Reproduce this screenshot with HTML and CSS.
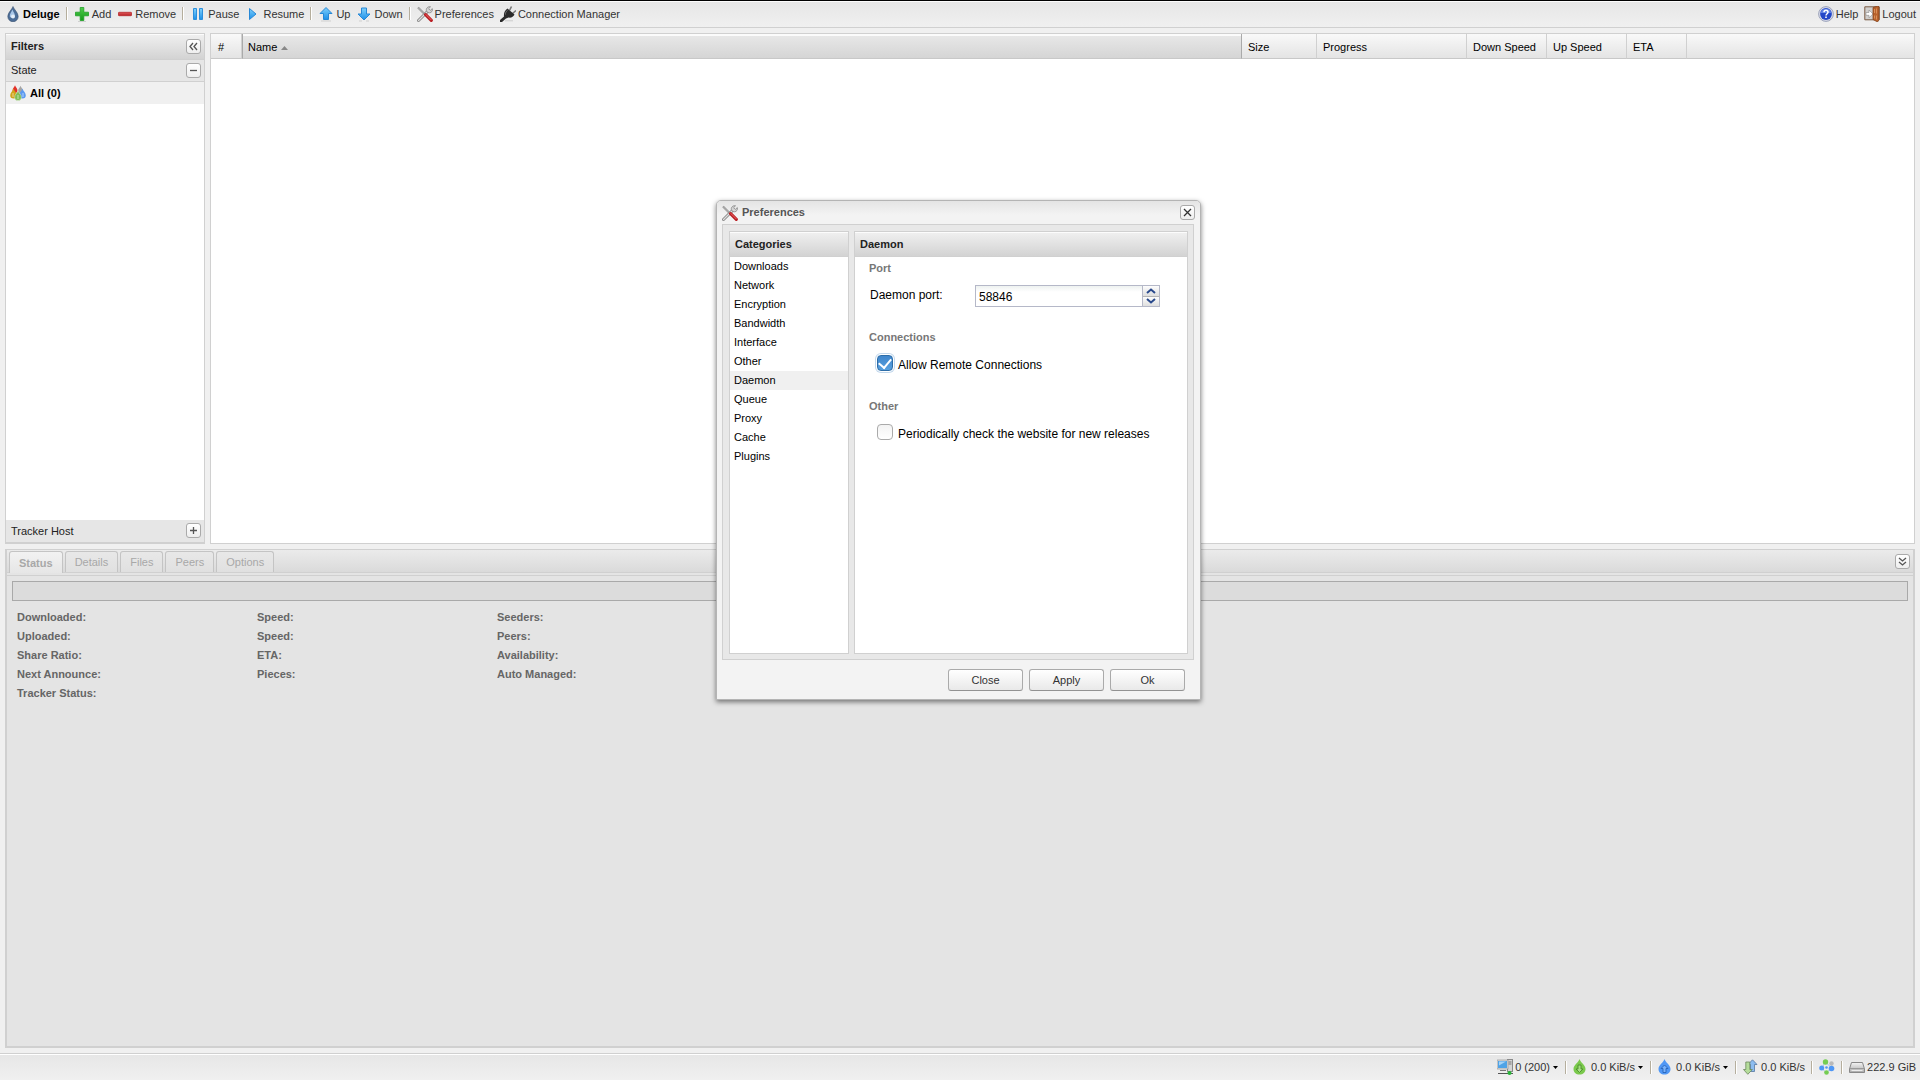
FILE: index.html
```html
<!DOCTYPE html>
<html lang="en">
<head>
  <meta charset="UTF-8">
  <meta name="viewport" content="width=device-width, initial-scale=1.0">
  <title>Deluge: Web UI</title>
  <link rel="stylesheet" href="styles.css">
</head>
<body>
  <svg class="defs" aria-hidden="true">
    <defs>
      <linearGradient id="blue" x1="0" y1="0" x2="0" y2="1">
        <stop offset="0" stop-color="#7fd0fb"/>
        <stop offset="1" stop-color="#1c8fe8"/>
      </linearGradient>
      <linearGradient id="green" x1="0" y1="0" x2="0" y2="1">
        <stop offset="0" stop-color="#4fce4b"/>
        <stop offset="1" stop-color="#159a1b"/>
      </linearGradient>
      <linearGradient id="red" x1="0" y1="0" x2="0" y2="1">
        <stop offset="0" stop-color="#e2595b"/>
        <stop offset="1" stop-color="#b52025"/>
      </linearGradient>
      <linearGradient id="metal" x1="0" y1="0" x2="0" y2="1">
        <stop offset="0" stop-color="#f4f4f4"/>
        <stop offset="1" stop-color="#a9a9a9"/>
      </linearGradient>
      <symbol id="tools" viewBox="0 0 16 16">
        <path d="M1 1.5 9 9.5" stroke="#8b8b8b" stroke-width="2"/>
        <path d="M1 1.5 9 9.5" stroke="#d8d8d8" stroke-width=".7"/>
        <path d="M1.5 14.5 10 6" stroke="#858585" stroke-width="3" stroke-linecap="round"/>
        <path d="M1.5 14.5 10 6" stroke="#dedede" stroke-width="1.3" stroke-linecap="round"/>
        <path d="M13.5.8 11.6 2.7l1.7 1.7 2-1.8c.6 2-.7 4.2-2.8 4.2C10.300 6.800 9 5.300 9.300 3.500 9.600 1.500 11.500.3 13.500.8Z" fill="#d5d5d5" stroke="#858585" stroke-width=".8"/>
        <path d="m8.600 8.600 5.700 5.700" stroke="#b91d22" stroke-width="3.200" stroke-linecap="round"/>
        <path d="m9 8.600 5.200 5.200" stroke="#ee6b69" stroke-width="1" stroke-linecap="round"/>
      </symbol>
    </defs>
  </svg>

  <header class="toolbar">
    <button class="tool brand">
      <svg viewBox="0 0 16 16"><path d="M8 .5C7 3.500 2.800 6.500 2.800 10.500a5.200 5.200 0 0 0 10.400 0C13.200 6.500 9 3.500 8 .5Z" fill="#4c6d97" stroke="#3b5271" stroke-width=".6"/><path d="M7.500 3.500C6.500 6 4.500 8 4.800 10.500c1 2 4.500 1.500 5-.5C10.300 7.500 8 6 7.500 3.500Z" fill="#a9c7e8"/><circle cx="8" cy="10.500" r="2" fill="#e4eef8"/></svg>
      Deluge
    </button>
    <span class="separator"></span>
    <button class="tool">
      <svg viewBox="0 0 16 16"><path d="M6.200 1.500h3.600v4.700h4.700v3.600H9.800v4.700H6.200V9.800H1.500V6.200h4.700Z" fill="url(#green)" stroke="#1ea025" stroke-width=".8"/><path d="M4 15.500h8" stroke="#cfcfcf"/></svg>
      Add
    </button>
    <button class="tool">
      <svg viewBox="0 0 16 16"><rect x="1.500" y="6.300" width="13" height="3.400" rx=".5" fill="url(#red)" stroke="#b8292d" stroke-width=".8"/></svg>
      Remove
    </button>
    <span class="separator"></span>
    <button class="tool">
      <svg viewBox="0 0 16 16"><path d="M3.500 2.500h3v11h-3Zm6 0h3v11h-3Z" fill="url(#blue)" stroke="#2c8fdc"/></svg>
      Pause
    </button>
    <button class="tool">
      <svg viewBox="0 0 16 16"><path d="m4.500 2.500 6.500 5.500-6.500 5.500Z" fill="url(#blue)" stroke="#2788d6"/></svg>
      Resume
    </button>
    <span class="separator"></span>
    <button class="tool">
      <svg viewBox="0 0 16 16"><path d="m8 1.500 6 6h-3.500v6h-5v-6H2Z" fill="url(#blue)" stroke="#2788d6"/><path d="M3 15h10" stroke="#cfcfcf"/></svg>
      Up
    </button>
    <button class="tool">
      <svg viewBox="0 0 16 16"><path d="m8 14 6-6h-3.500V2h-5v6H2Z" fill="url(#blue)" stroke="#2788d6"/><path d="M3 15h3m4 0h3" stroke="#cfcfcf"/></svg>
      Down
    </button>
    <span class="separator"></span>
    <button class="tool">
      <svg><use href="#tools"/></svg>
      Preferences
    </button>
    <button class="tool">
      <svg viewBox="0 0 16 16"><path d="m9.500 4.500 2-4M12.500 7.500l3.500-3" stroke="#777" stroke-width="1.600"/><path d="M7.500 2.500 14.500 8.500c-1 2.500-3.500 3.500-6 3L6 12.500l-4 3.500H0v-2l4-3.500C3.500 7 5 4 7.500 2.500Z" fill="#2b2b2b"/><path d="M7.500 4.500c-1.500 1-2.200 2.500-2 4" stroke="#777" fill="none"/><path d="M5 14.800h8" stroke="#ccc"/></svg>
      Connection Manager
    </button>
    <span class="spacer"></span>
    <button class="tool">
      <svg viewBox="0 0 16 16"><circle cx="8" cy="8" r="7.400" fill="#d9dcea" stroke="#8088a6" stroke-width=".7"/><circle cx="8" cy="8" r="5.900" fill="#2347c8"/><path d="M2.700 7a5.400 5.400 0 0 1 10.600 0Z" fill="#5f82e4"/><path d="M6 6.200C6 3.700 10 3.700 10 6.200 10 7.700 8 7.800 8 9.500" fill="none" stroke="#fff" stroke-width="1.500"/><path d="M7.200 10.500h1.600V12H7.200Z" fill="#fff"/></svg>
      Help
    </button>
    <button class="tool">
      <svg viewBox="0 0 16 16"><path d="M.8.800h14.400v13H.8Z" fill="#d1cfcd" stroke="#7a5a44"/><path d="M2 6.500h3V4l4 3.900-4 3.900V9.300H2Z" fill="#fff" stroke="#8d8d8d" stroke-width=".6"/><path d="M9 1.500 13.500 0 15 .8v13L13.500 16 9 13.500Z" fill="#b8622c" stroke="#803f18" stroke-width=".7"/><path d="M10.500 3v4M12.500 2.500v5M10.500 9.500v3M12.500 9.500v4" stroke="#dc9560" stroke-width=".9"/></svg>
      Logout
    </button>
  </header>

  <main class="workspace">
    <div class="top-row">
      <aside class="sidebar">
        <div class="panel-header">
          <h2>Filters</h2>
          <button class="tool-box" aria-label="Collapse filters"><svg viewBox="0 0 15 15"><path d="m7 4-3 3.500L7 11M11 4 8 7.500 11 11"/></svg></button>
        </div>
        <div class="filter-header">
          State
          <button class="tool-box" aria-label="Collapse state"><svg viewBox="0 0 15 15"><path d="M4 7.500h7"/></svg></button>
        </div>
        <a class="filter-item" href="#all">
          <svg viewBox="0 0 16 16"><path d="M5 .3C4.500 2 2.500 3.500 2.500 5.500a2.500 2.500 0 0 0 5 0C7.500 3.500 5.500 2 5 .3Z" fill="#e3312b"/><path d="M10.500.8C10 2.500 8 4 8 6a2.500 2.500 0 0 0 5 0c0-2-2-3.500-2.500-5.200Z" fill="#a5a5a5"/><path d="M3.500 3.500C3 6 .2 7.500.2 10.300a3.300 3.300 0 0 0 6.600 0C6.800 7.500 4 6 3.500 3.500Z" fill="#d0a51c"/><path d="M12.500 3.500C12 6 9.200 7.500 9.200 10.300a3.300 3.300 0 0 0 6.600 0C15.800 7.500 13 6 12.500 3.500Z" fill="#5b9af0"/><path d="M8 5.500C7.400 8 4.600 9.500 4.600 12.200a3.400 3.400 0 0 0 6.800 0C11.400 9.500 8.600 8 8 5.500Z" fill="#7fbd55" stroke="#eef5e9" stroke-width=".4"/><path d="M8 10v4M3 8v4M13 8v4" stroke="#fff" stroke-opacity=".55"/></svg>
          All (0)
        </a>
        <div class="filter-body"></div>
        <div class="filter-header last">
          Tracker Host
          <button class="tool-box" aria-label="Expand tracker host"><svg viewBox="0 0 15 15"><path d="M4 7.500h7M7.500 4v7"/></svg></button>
        </div>
      </aside>

      <section class="torrents">
        <table>
          <colgroup>
            <col class="col-number">
            <col>
            <col class="col-size">
            <col class="col-progress">
            <col class="col-speed">
            <col class="col-speed">
            <col class="col-eta">
            <col class="col-rest">
          </colgroup>
          <thead>
            <tr>
              <th class="number">#</th>
              <th class="sorted">Name <svg viewBox="0 0 7 4"><path d="M3.500 0 7 4H0Z"/></svg></th>
              <th>Size</th>
              <th>Progress</th>
              <th>Down Speed</th>
              <th>Up Speed</th>
              <th>ETA</th>
              <td></td>
            </tr>
          </thead>
        </table>
      </section>
    </div>

    <section class="details">
      <div class="tabs">
        <button class="tab active" disabled>Status</button>
        <button class="tab" disabled>Details</button>
        <button class="tab" disabled>Files</button>
        <button class="tab" disabled>Peers</button>
        <button class="tab" disabled>Options</button>
        <span class="spacer"></span>
        <button class="tool-box" aria-label="Collapse details"><svg viewBox="0 0 15 15"><path d="m4 4 3.500 3L11 4M4 8l3.500 3L11 8"/></svg></button>
      </div>
      <div class="tab-body">
        <div class="progress"></div>
        <div class="stats">
          <dl>
            <dt>Downloaded:</dt>
            <dt>Uploaded:</dt>
            <dt>Share Ratio:</dt>
            <dt>Next Announce:</dt>
            <dt>Tracker Status:</dt>
          </dl>
          <dl>
            <dt>Speed:</dt>
            <dt>Speed:</dt>
            <dt>ETA:</dt>
            <dt>Pieces:</dt>
          </dl>
          <dl>
            <dt>Seeders:</dt>
            <dt>Peers:</dt>
            <dt>Availability:</dt>
            <dt>Auto Managed:</dt>
          </dl>
        </div>
      </div>
    </section>
  </main>

  <footer class="toolbar statusbar">
    <span class="spacer"></span>
    <button class="tool menu">
      <svg viewBox="0 0 16 16"><rect x="10.500" y=".5" width="5" height="12" fill="#d4d4d4" stroke="#8a8a8a"/><path d="M11.500 3h3M11.500 5h3" stroke="#777"/><rect x=".5" y="1.500" width="10" height="8" fill="#4fa3e6" stroke="#dcdcdc"/><rect x="0" y="1" width="11" height="9" fill="none" stroke="#8a8a8a" stroke-width=".6"/><path d="M2 2.500h7l-7 4Z" fill="#a5d3f7"/><path d="M3 11.500h6" stroke="#777"/><path d="M1 14.500h15" stroke="#555"/><circle cx="12.500" cy="14" r="2" fill="#27b436"/></svg>
      0 (200)
      <svg class="caret" viewBox="0 0 5 3"><path d="M0 0h5L2.500 3Z"/></svg>
    </button>
    <span class="separator"></span>
    <button class="tool menu">
      <svg viewBox="0 0 16 16"><path d="M6.500 0C5.500 3.500.5 6 .5 10c0 3.500 2.500 5.500 6 5.500s6-2 6-5.500c0-4-5-6.500-6-10Z" fill="#7ac94c"/><path d="M5 6h3v4h2L6.500 13.500 3 10h2Z" fill="#a7dc86" stroke="#4b8c2b" stroke-width=".9"/></svg>
      0.0 KiB/s
      <svg class="caret" viewBox="0 0 5 3"><path d="M0 0h5L2.500 3Z"/></svg>
    </button>
    <span class="separator"></span>
    <button class="tool menu">
      <svg viewBox="0 0 16 16"><path d="M6.500 0C5.500 3.500.5 6 .5 10c0 3.500 2.500 5.500 6 5.500s6-2 6-5.500c0-4-5-6.500-6-10Z" fill="#4f97f5"/><path d="M5 13.500h3v-4h2L6.500 6 3 9.500h2Z" fill="#79b2fa" stroke="#2763b8" stroke-width=".9"/></svg>
      0.0 KiB/s
      <svg class="caret" viewBox="0 0 5 3"><path d="M0 0h5L2.500 3Z"/></svg>
    </button>
    <span class="separator"></span>
    <button class="tool">
      <svg viewBox="0 0 16 16"><path d="M7.500 12.500h4v-7H14L9.500.8 5 5.500h2.500Z" fill="#8cbcf0" stroke="#56779f" stroke-width=".8"/><path d="M2.800 3h4v7.500h2.500L4.800 15.300.5 10.500h2.300Z" fill="#b5dd9b" stroke="#69865a" stroke-width=".8"/></svg>
      0.0 KiB/s
    </button>
    <span class="separator"></span>
    <button class="tool" aria-label="DHT nodes">
      <svg viewBox="0 0 16 16"><path d="M6 3 3 9l4 5 6-5Z" stroke="#aac4e6" fill="none"/><circle cx="6.500" cy="3" r="2.700" fill="#75cd52"/><circle cx="12.500" cy="4.500" r="2.200" fill="#b9b9b9"/><circle cx="2.700" cy="9" r="2.500" fill="#4f97f5"/><circle cx="12.500" cy="9.500" r="2.800" fill="#4f97f5"/><circle cx="7.500" cy="13.500" r="2.300" fill="#75cd52"/><circle cx="7.500" cy="8.500" r="1.300" fill="#4f97f5"/></svg>
    </button>
    <span class="separator"></span>
    <button class="tool">
      <svg viewBox="0 0 16 16"><path d="M2.500 3.500h11l2 6.500v3.500H.5V10Z" fill="url(#metal)" stroke="#888"/><path d="M.5 9.500h15" stroke="#999"/><path d="M2.500 11.500h11" stroke="#ececec"/></svg>
      222.9 GiB
    </button>
  </footer>

  <div class="window" role="dialog" aria-labelledby="window-title">
    <div class="window-title">
      <svg><use href="#tools"/></svg>
      <h1 id="window-title">Preferences</h1>
      <button class="tool-box close" aria-label="Close window"><svg viewBox="0 0 15 15"><path d="m4 4 7 7M11 4l-7 7"/></svg></button>
    </div>
    <div class="window-body">
      <nav class="categories">
        <h2 class="panel-header">Categories</h2>
        <a href="#downloads">Downloads</a>
        <a href="#network">Network</a>
        <a href="#encryption">Encryption</a>
        <a href="#bandwidth">Bandwidth</a>
        <a href="#interface">Interface</a>
        <a href="#other">Other</a>
        <a href="#daemon" class="selected">Daemon</a>
        <a href="#queue">Queue</a>
        <a href="#proxy">Proxy</a>
        <a href="#cache">Cache</a>
        <a href="#plugins">Plugins</a>
      </nav>
      <form class="page">
        <h2 class="panel-header">Daemon</h2>
        <h3>Port</h3>
        <div class="port-row">
          <label for="port">Daemon port:</label>
          <div class="spinner">
            <input type="text" id="port" value="58846">
            <div class="spinner-buttons">
              <button type="button" aria-label="Increase"><svg viewBox="0 0 10 6"><path d="m1 5 4-3.500L9 5"/></svg></button>
              <button type="button" aria-label="Decrease"><svg viewBox="0 0 10 6"><path d="m1 1 4 3.500L9 1"/></svg></button>
            </div>
          </div>
        </div>
        <h3>Connections</h3>
        <div class="check-row">
          <input type="checkbox" id="remote" class="focused" checked>
          <label for="remote">Allow Remote Connections</label>
        </div>
        <h3>Other</h3>
        <div class="check-row">
          <input type="checkbox" id="releases">
          <label for="releases">Periodically check the website for new releases</label>
        </div>
      </form>
    </div>
    <div class="window-footer">
      <button>Close</button>
      <button>Apply</button>
      <button>Ok</button>
    </div>
  </div>
</body>
</html>
```
FILE: styles.css
```css
* {
  box-sizing: border-box;
}

body {
  display: flex;
  flex-direction: column;
  height: 100vh;
  margin: 0;
  border-top: 1px solid #000;
  background: #f0f0f0;
  color: #222;
  font: 11px/14px "Liberation Sans", Arial, sans-serif;
  overflow: hidden;
}

h1, h2, h3, dl {
  margin: 0;
  font-size: 11px;
}

button {
  font: inherit;
  color: inherit;
  padding: 0;
}

a {
  color: #000;
  text-decoration: none;
}

.defs {
  position: absolute;
  width: 0;
  height: 0;
}

.spacer {
  flex: 1;
}

/* toolbars */
.toolbar {
  display: flex;
  align-items: center;
  flex: none;
  height: 27px;
  padding: 0 1px 2px 2px;
  border-top: 1px solid #fcfcfc;
  border-bottom: 1px solid #d0d0d0;
  background: linear-gradient(#e6e6e6, #f0f0f0);
  color: #333;
}

.tool {
  display: flex;
  align-items: center;
  gap: 2px;
  height: 22px;
  padding: 0 3px;
  border: none;
  background: none;
  white-space: nowrap;
}

.tool svg {
  width: 16px;
  height: 16px;
}

.brand {
  color: #000;
  font-weight: bold;
}

.separator {
  width: 2px;
  height: 13px;
  margin: 0 3px;
  border-left: 1px solid #b5ae9d;
  border-right: 1px solid #fff;
}

.tool.menu {
  padding-right: 4px;
}

.tool .caret {
  width: 5px;
  height: 3px;
  margin-left: 1px;
}

.statusbar {
  padding-bottom: 0;
  border-top: 1px solid #d0d0d0;
  border-bottom: none;
  box-shadow: inset 0 1px #fff;
}

/* panels */
.workspace {
  display: flex;
  flex-direction: column;
  flex: 1;
  gap: 5px;
  padding: 5px;
  min-height: 0;
}

.top-row {
  display: flex;
  gap: 5px;
  flex: 511;
  min-height: 0;
}

.sidebar {
  display: flex;
  flex-direction: column;
  width: 200px;
  border: 1px solid #d0d0d0;
  background: #fff;
}

.panel-header {
  display: flex;
  align-items: center;
  justify-content: space-between;
  height: 26px;
  padding: 0 3px 2px 5px;
  border-top: 1px solid #fcfcfc;
  border-bottom: 1px solid #d0d0d0;
  background: linear-gradient(#efefef, #d3d3d3);
  color: #222;
}

.tool-box {
  width: 15px;
  height: 15px;
  border: 1px solid #aaa;
  border-radius: 3px;
  background: linear-gradient(#fff, #eee);
  line-height: 0;
}

.tool-box svg {
  width: 15px;
  height: 15px;
  margin: -1px;
  fill: none;
  stroke: #555;
  stroke-width: 1.3;
}

.tool-box.close svg {
  stroke: #333;
}

.filter-header {
  display: flex;
  align-items: center;
  justify-content: space-between;
  height: 22px;
  padding: 0 3px 1px 5px;
  border-bottom: 1px solid #d0d0d0;
  background: #e6e6e6;
}

.filter-header.last {
  height: 23px;
}

.filter-item {
  display: flex;
  align-items: center;
  gap: 4px;
  height: 22px;
  padding-left: 4px;
  background: #f0f0f0;
  font-weight: bold;
}

.filter-item svg {
  width: 16px;
  height: 16px;
}

.filter-body {
  flex: 1;
}

.torrents {
  flex: 1;
  border: 1px solid #d0d0d0;
  background: #fff;
}

.torrents table {
  width: 100%;
  table-layout: fixed;
  border-spacing: 0;
  background: linear-gradient(#f9f9f9, #e3e3e3);
  color: #000;
}

.torrents th,
.torrents td {
  height: 25px;
  padding: 1px 5px 0 6px;
  border-bottom: 1px solid #c8c8c8;
  border-right: 1px solid #d0d0d0;
  font-weight: normal;
  text-align: left;
  white-space: nowrap;
}

.torrents td {
  border-right: none;
}

.torrents .number {
  padding-left: 7px;
}

.torrents .sorted {
  padding-left: 5px;
  border-left: 1px solid #aaa;
  border-right-color: #aaa;
  background: linear-gradient(#fbfbfb 2px, #e7e7e7 2px, #d5d5d5);
}

.sorted svg {
  width: 7px;
  height: 4px;
  margin: 0 0 1px 1px;
  fill: #888;
}

.col-number {
  width: 31px;
}

.col-size {
  width: 75px;
}

.col-progress {
  width: 150px;
}

.col-speed {
  width: 80px;
}

.col-eta {
  width: 60px;
}

.col-rest {
  width: 227px;
}

/* torrent details */
.details {
  display: flex;
  flex-direction: column;
  flex: 496;
  min-height: 0;
  border: 1px solid #d0d0d0;
  border-width: 1px 2px 2px;
  background: #e4e4e4;
}

.tabs {
  display: flex;
  align-items: flex-end;
  gap: 2px;
  height: 23px;
  padding: 0 3px 0 2px;
  border-bottom: 1px solid #d0d0d0;
  background: linear-gradient(#ebebeb, #dadada);
}

.tabs .tool-box {
  margin-bottom: 3px;
}

.tab {
  height: 21px;
  padding: 0 9px;
  border: 1px solid #c4c4c4;
  border-bottom: none;
  border-radius: 3px 3px 0 0;
  background: linear-gradient(#e8e8e8, #e0e0e0);
  color: #a8a8a8;
}

.tab.active {
  height: 22px;
  margin-bottom: -1px;
  background: linear-gradient(#f2f2f2, #e6e6e6);
  font-weight: bold;
}

.tab-body {
  flex: 1;
  margin-top: 2px;
  padding: 5px;
  border-top: 1px solid #d0d0d0;
}

.progress {
  height: 20px;
  border: 1px solid #a9a9a9;
  background: #dcdcdc;
}

.stats {
  display: flex;
  padding: 7px 5px;
}

.stats dl {
  width: 240px;
  color: #666;
  font-weight: bold;
  line-height: 19px;
}

/* preferences window */
.window {
  position: absolute;
  top: 200px;
  left: calc(50% - 244px);
  width: 485px;
  padding: 0 6px 0 5px;
  border: 1px solid #b4b4b4;
  border-radius: 5px 5px 0 0;
  background: #f3f3f3;
  box-shadow: 0 2px 5px rgba(0, 0, 0, 0.5);
}

.window-title {
  display: flex;
  align-items: center;
  gap: 4px;
  height: 23px;
  margin: 0 -6px 0 -5px;
  padding: 0 5px;
  border-radius: 4px 4px 0 0;
  background: linear-gradient(#e4e4e4, #f3f3f3 60%);
  color: #555;
}

.window-title h1 {
  flex: 1;
  padding-bottom: 2px;
}

.window-title > svg {
  width: 16px;
  height: 16px;
}

.window-body {
  display: flex;
  gap: 5px;
  height: 436px;
  padding: 6px 5px 5px 6px;
  border: 1px solid #d0d0d0;
  background: #e8e8e8;
}

.categories {
  width: 120px;
  border: 1px solid #d0d0d0;
  background: #fff;
}

.window-body .panel-header {
  height: 25px;
}

.categories a {
  display: block;
  padding-left: 4px;
  line-height: 19px;
}

.categories .selected {
  background: #f0f0f0;
}

.page {
  flex: 1;
  border: 1px solid #d0d0d0;
  background: #fff;
  font-size: 12px;
  color: #000;
}

.page h3 {
  padding: 4px 14px 0;
  color: #777;
}

.port-row {
  display: flex;
  justify-content: space-between;
  height: 51px;
  padding: 10px 27px 0 15px;
}

.port-row label {
  padding-top: 3px;
}

.spinner {
  display: flex;
  width: 185px;
  height: 22px;
  border: 1px solid #b5b8c8;
}

.spinner input {
  flex: 1;
  min-width: 0;
  padding: 2px 3px 0;
  border: none;
  outline: none;
  background: linear-gradient(#eef2f0, #fff 6px);
  font: inherit;
}

.spinner-buttons {
  display: flex;
  flex-direction: column;
  width: 17px;
  border-left: 1px solid #b5b8c8;
}

.spinner-buttons button {
  flex: 1;
  border: none;
  background: linear-gradient(#fdfdfd, #dedede);
  line-height: 0;
}

.spinner-buttons button + button {
  border-top: 1px solid #b4b4b4;
}

.spinner-buttons svg {
  width: 10px;
  height: 6px;
  fill: none;
  stroke: #29498c;
  stroke-width: 2;
}

.check-row {
  display: flex;
  gap: 5px;
  height: 51px;
  padding: 11px 0 0 22px;
}

.check-row label {
  padding-top: 3px;
}

.check-row input {
  appearance: none;
  width: 16px;
  height: 16px;
  margin: 0;
  border: 1px solid #aaa;
  border-radius: 4px;
  background: linear-gradient(#f3f3f3, #fff);
}

.check-row input:checked {
  display: flex;
  justify-content: center;
  border-color: #2d6da8;
  background: linear-gradient(#3f86cc, #58a0de);
}

.check-row input:checked::before {
  content: "";
  width: 6px;
  height: 10px;
  border: solid #fff;
  border-width: 0 2px 2px 0;
  transform: rotate(40deg);
}

.check-row .focused {
  box-shadow: 0 0 0 1px #fff, 0 0 0 2px #c3d8ec;
}

.window-footer {
  display: flex;
  justify-content: flex-end;
  gap: 6px;
  padding: 9px 9px 8px;
}

.window-footer button {
  width: 75px;
  height: 22px;
  border: 1px solid #aaa;
  border-bottom-color: #929292;
  border-radius: 3px;
  background: linear-gradient(#fff, #e9e9e9);
  color: #333;
}
```
